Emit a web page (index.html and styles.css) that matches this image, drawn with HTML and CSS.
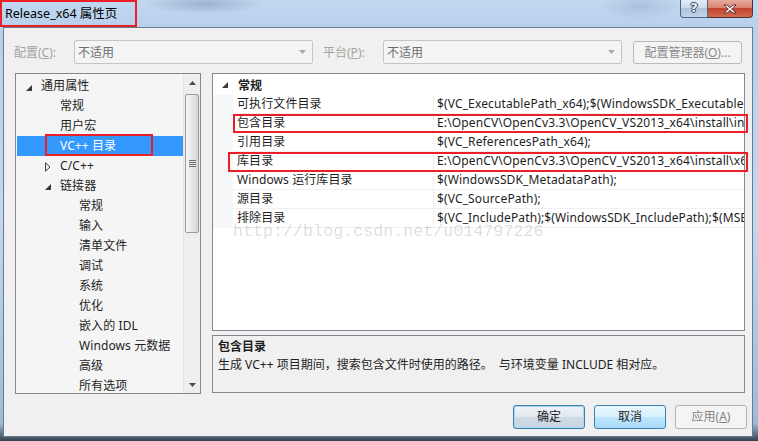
FILE: index.html
```html
<!DOCTYPE html>
<html lang="zh-CN">
<head>
<meta charset="utf-8">
<title>Release_x64 属性页</title>
<link rel="stylesheet" href="styles.css">
</head>
<body>
<div class="titlebar">
  <div class="title-box">Release_x64 属性页</div>
  <div class="caption">
    <div class="cap-help">?</div>
    <div class="cap-close"><svg width="16" height="10" viewBox="0 0 16 10"><path d="M2 1h3l3 2.6L11 1h3l-4.3 4L14 9h-3l-3-2.6L5 9H2l4.3-4z" fill="#fff" stroke="#4a2a2a" stroke-width="0.9" stroke-linejoin="round"/></svg></div>
  </div>
</div>
<div class="client">
  <div class="toolbar">
    <span class="lbl">配置(<u>C</u>):</span>
    <div class="combo"><span>不适用</span><svg class="dd" width="7" height="4" viewBox="0 0 7 4"><path d="M0 0h7L3.5 4z" fill="#a8a8a8"/></svg></div>
    <span class="lbl lbl2">平台(<u>P</u>):</span>
    <div class="combo"><span>不适用</span><svg class="dd" width="7" height="4" viewBox="0 0 7 4"><path d="M0 0h7L3.5 4z" fill="#a8a8a8"/></svg></div>
    <div class="btn-cfg">配置管理器(<u>O</u>)...</div>
  </div>
  <div class="main">
    <div class="tree">
      <div class="tree-list">
        <div class="item l0"><span class="tg"><svg width="6" height="6" viewBox="0 0 6 6"><path d="M6 0v6H0z" fill="#3a3a3a"/></svg></span>通用属性</div>
        <div class="item l1"><span class="tg"></span>常规</div>
        <div class="item l1"><span class="tg"></span>用户宏</div>
        <div class="item l1 sel"><span class="tg"></span>VC++ 目录<span class="mark-tree"></span></div>
        <div class="item l1"><span class="tg"><svg width="6" height="10" viewBox="0 0 6 10"><path d="M0.5 0.8L5 5 0.5 9.2z" fill="none" stroke="#3a3a3a" stroke-width="1"/></svg></span>C/C++</div>
        <div class="item l1"><span class="tg"><svg width="6" height="6" viewBox="0 0 6 6"><path d="M6 0v6H0z" fill="#3a3a3a"/></svg></span>链接器</div>
        <div class="item l2">常规</div>
        <div class="item l2">输入</div>
        <div class="item l2">清单文件</div>
        <div class="item l2">调试</div>
        <div class="item l2">系统</div>
        <div class="item l2">优化</div>
        <div class="item l2">嵌入的 IDL</div>
        <div class="item l2">Windows 元数据</div>
        <div class="item l2">高级</div>
        <div class="item l2">所有选项</div>
      </div>
      <div class="vscroll">
        <div class="arr up"><svg width="7" height="4" viewBox="0 0 7 4"><path d="M3.5 0L7 4H0z" fill="#4d4d4d"/></svg></div>
        <div class="thumb"><span class="grip"></span></div>
        <div class="track"></div>
        <div class="arr dn"><svg width="7" height="4" viewBox="0 0 7 4"><path d="M0 0h7L3.5 4z" fill="#4d4d4d"/></svg></div>
      </div>
    </div>
    <div class="right">
      <div class="grid">
        <div class="ghead"><span class="gtg"><svg width="6" height="6" viewBox="0 0 6 6"><path d="M6 0v6H0z" fill="#3a3a3a"/></svg></span><b>常规</b></div>
        <div class="row"><span class="gut"></span><span class="name">可执行文件目录</span><span class="val">$(VC_ExecutablePath_x64);$(WindowsSDK_ExecutablePath);$(VS_ExecutablePath)</span></div>
        <div class="row"><span class="gut"></span><span class="name">包含目录</span><span class="val">E:\OpenCV\OpenCv3.3\OpenCV_VS2013_x64\install\include;E:\OpenCV</span></div>
        <div class="row"><span class="gut"></span><span class="name">引用目录</span><span class="val">$(VC_ReferencesPath_x64);</span></div>
        <div class="row"><span class="gut"></span><span class="name">库目录</span><span class="val">E:\OpenCV\OpenCv3.3\OpenCV_VS2013_x64\install\x64\vc12\lib</span></div>
        <div class="row"><span class="gut"></span><span class="name">Windows 运行库目录</span><span class="val">$(WindowsSDK_MetadataPath);</span></div>
        <div class="row"><span class="gut"></span><span class="name">源目录</span><span class="val">$(VC_SourcePath);</span></div>
        <div class="row"><span class="gut"></span><span class="name">排除目录</span><span class="val">$(VC_IncludePath);$(WindowsSDK_IncludePath);$(MSBuild_ExecutablePath)</span></div>
        <div class="watermark">http://blog.csdn.net/u014797226</div>
        <div class="mark mark1"></div>
        <div class="mark mark2"></div>
      </div>
      <div class="desc">
        <div class="dtitle">包含目录</div>
        <div class="dtext">生成 VC++ 项目期间，搜索包含文件时使用的路径。&nbsp; 与环境变量 INCLUDE 相对应。</div>
      </div>
    </div>
  </div>
  <div class="buttons">
    <div class="btn ok">确定</div>
    <div class="btn cancel">取消</div>
    <div class="btn apply">应用(<u>A</u>)</div>
  </div>
</div>
</body>
</html>
```
FILE: styles.css
```css
* { box-sizing: border-box; }
html, body { margin: 0; padding: 0; }
body {
  width: 758px;
  height: 441px;
  overflow: hidden;
  background: linear-gradient(to bottom, #b7cfea 0%, #c3d8ef 50%, #9fb9d8 96%, #34414f 100%);
  font-family: "Noto Sans", "Noto Sans CJK SC", sans-serif;
  font-size: 12px;
  color: #1e1e1e;
}
u { text-decoration: underline; text-underline-offset: 1px; }

.titlebar {
  height: 27px;
  display: flex;
  align-items: flex-start;
  background:
    radial-gradient(ellipse 60px 10px at 205px 4px, rgba(90,110,140,0.35), rgba(90,110,140,0) 100%),
    radial-gradient(ellipse 40px 14px at 640px 6px, rgba(110,130,160,0.25), rgba(110,130,160,0) 100%),
    linear-gradient(to bottom, #c2d8f1, #b8d0ec);
}
.title-box {
  width: 137px;
  height: 27px;
  border: 2px solid #ec1f26;
  padding-left: 3px;
  line-height: 23px;
  font-size: 12.5px;
  color: #000;
  white-space: nowrap;
}
.caption { margin-left: auto; margin-right: 5px; display: flex; }
.cap-help {
  width: 28px;
  height: 18px;
  border: 1px solid #55657d;
  border-top: none;
  border-radius: 0 0 0 4px;
  background: linear-gradient(to bottom, #e4edf7 0%, #cbdaec 45%, #aec2dc 50%, #c0d3ea 100%);
  text-align: center;
  font-family: "DejaVu Sans", sans-serif;
  font-weight: bold;
  font-size: 13px;
  line-height: 16px;
  color: #eef3f9;
  text-shadow: 1px 0 #37475c, -1px 0 #37475c, 0 1px #37475c, 0 -1px #37475c;
}
.cap-close {
  width: 45px;
  height: 18px;
  border: 1px solid #4f3434;
  border-left: none;
  border-top: none;
  border-radius: 0 0 4px 0;
  background: linear-gradient(to bottom, #e6ab9f 0%, #d9826f 45%, #c1432e 50%, #d26a50 100%);
  display: flex;
  align-items: center;
  justify-content: center;
}

.client {
  margin-left: 3px;
  width: 750px;
  height: 410px;
  border: 1px solid #6b7b8f;
  background: #f0f0f0;
  display: flex;
  flex-direction: column;
}

.toolbar {
  display: flex;
  align-items: center;
  height: 24px;
  margin-top: 12px;
  padding-left: 10px;
}
.lbl { width: 60px; color: #a3a3a3; white-space: nowrap; }
.lbl2 { margin-left: 10px; }
.combo {
  width: 239px;
  height: 24px;
  border: 1px solid #c5c5c5;
  border-radius: 2px;
  background: #f4f4f4;
  display: flex;
  align-items: center;
  padding-left: 3px;
  color: #6d6d6d;
}
.combo .dd { margin-left: auto; margin-right: 6px; }
.btn-cfg {
  margin-left: 11px;
  width: 109px;
  height: 23px;
  border: 1px solid #b8bcc0;
  border-radius: 3px;
  background: #f4f4f4;
  color: #8a8a8a;
  text-align: center;
  line-height: 21px;
  white-space: nowrap;
}

.main { display: flex; margin-top: 9px; padding-left: 11px; }

.tree {
  width: 186px;
  height: 321px;
  border: 1px solid #828790;
  background: #f5f5f5;
  display: flex;
}
.tree-list { width: 167px; padding-top: 2px; padding-left: 1px; letter-spacing: 0.1px; }
.item {
  height: 20px;
  line-height: 20px;
  display: flex;
  align-items: center;
  white-space: nowrap;
  position: relative;
  color: #1e1e1e;
}
.tg { width: 15px; height: 20px; display: flex; align-items: center; }
.l0 { padding-left: 9px; }
.l0 .tg svg { margin-top: 3px; }
.l1 { padding-left: 28px; }
.l1 .tg svg { margin-top: 2px; }
.l2 { padding-left: 62px; }
.sel { background: #3399ff; color: #fff; }
.mark-tree {
  position: absolute;
  left: 28px;
  top: -2px;
  width: 108px;
  height: 22px;
  border: 2px solid #ec1f26;
}

.vscroll {
  width: 17px;
  display: flex;
  flex-direction: column;
  background: #eeeeee;
  border-left: 1px solid #e4e4e4;
}
.arr { height: 17px; display: flex; align-items: center; justify-content: center; }
.thumb {
  margin: 3px 1px 0 1px;
  height: 139px;
  border: 1px solid #9a9a9a;
  border-radius: 2px;
  background: linear-gradient(to right, #f5f5f5, #e6e6e6 50%, #d6d6d6);
  display: flex;
  align-items: center;
  justify-content: center;
}
.grip {
  width: 7px;
  height: 8px;
  background: repeating-linear-gradient(to bottom, #6e6e6e 0, #6e6e6e 1px, transparent 1px, transparent 2px);
}
.track { flex: 1; }

.right {
  margin-left: 11px;
  width: 533px;
  display: flex;
  flex-direction: column;
}
.grid {
  height: 258px;
  border: 1px solid #828790;
  background: #fff;
  position: relative;
}
.ghead { height: 21px; display: flex; align-items: center; padding-left: 9px; }
.gtg { width: 16px; display: flex; align-items: center; }
.ghead b { font-weight: 700; color: #1e1e1e; }
.row { display: flex; height: 19px; }
.gut { width: 20px; background: #f6f7f9; }
.name {
  width: 200px;
  padding-left: 4px;
  line-height: 18px;
  border-bottom: 1px solid #eef0f3;
  white-space: nowrap;
  letter-spacing: 0.1px;
}
.val {
  flex: 1;
  min-width: 0;
  padding-left: 3px;
  line-height: 18px;
  border-left: 1px solid #eef0f3;
  border-bottom: 1px solid #eef0f3;
  white-space: nowrap;
  overflow: hidden;
  letter-spacing: 0.13px;
}
.watermark {
  position: absolute;
  left: 20px;
  top: 148px;
  font-family: "Liberation Mono", monospace;
  font-size: 16.7px;
  line-height: 20px;
  color: rgba(0, 0, 0, 0.15);
  white-space: nowrap;
}
.mark { position: absolute; border: 2px solid #ec1f26; }
.mark1 { left: 20px; top: 40px; width: 515px; height: 19px; }
.mark2 { left: 15px; top: 78px; width: 520px; height: 20px; }

.desc {
  margin-top: 4px;
  height: 58px;
  border: 1px solid #828790;
  background: #f0f0f0;
  padding: 2px 5px;
}
.dtitle { font-weight: 700; line-height: 18px; }
.dtext { line-height: 18px; white-space: nowrap; }

.buttons {
  display: flex;
  justify-content: flex-end;
  gap: 9px;
  margin-top: 11px;
  padding-right: 5px;
}
.btn {
  width: 72px;
  height: 24px;
  border-radius: 3px;
  text-align: center;
  line-height: 22px;
  white-space: nowrap;
}
.ok {
  border: 1px solid #3c7fb1;
  background: linear-gradient(to bottom, #eef3f7 0%, #e1e9f0 48%, #cfdbe5 52%, #c8d6e2 100%);
  box-shadow: inset 0 0 0 1px #a8d8f2;
}
.cancel {
  border: 1px solid #3c7fb1;
  background: linear-gradient(to bottom, #eaf6fd 0%, #d9f0fc 48%, #bee6fd 52%, #a7d9f5 100%);
}
.apply {
  border: 1px solid #adb2b5;
  background: #f4f4f4;
  color: #838383;
}
```
